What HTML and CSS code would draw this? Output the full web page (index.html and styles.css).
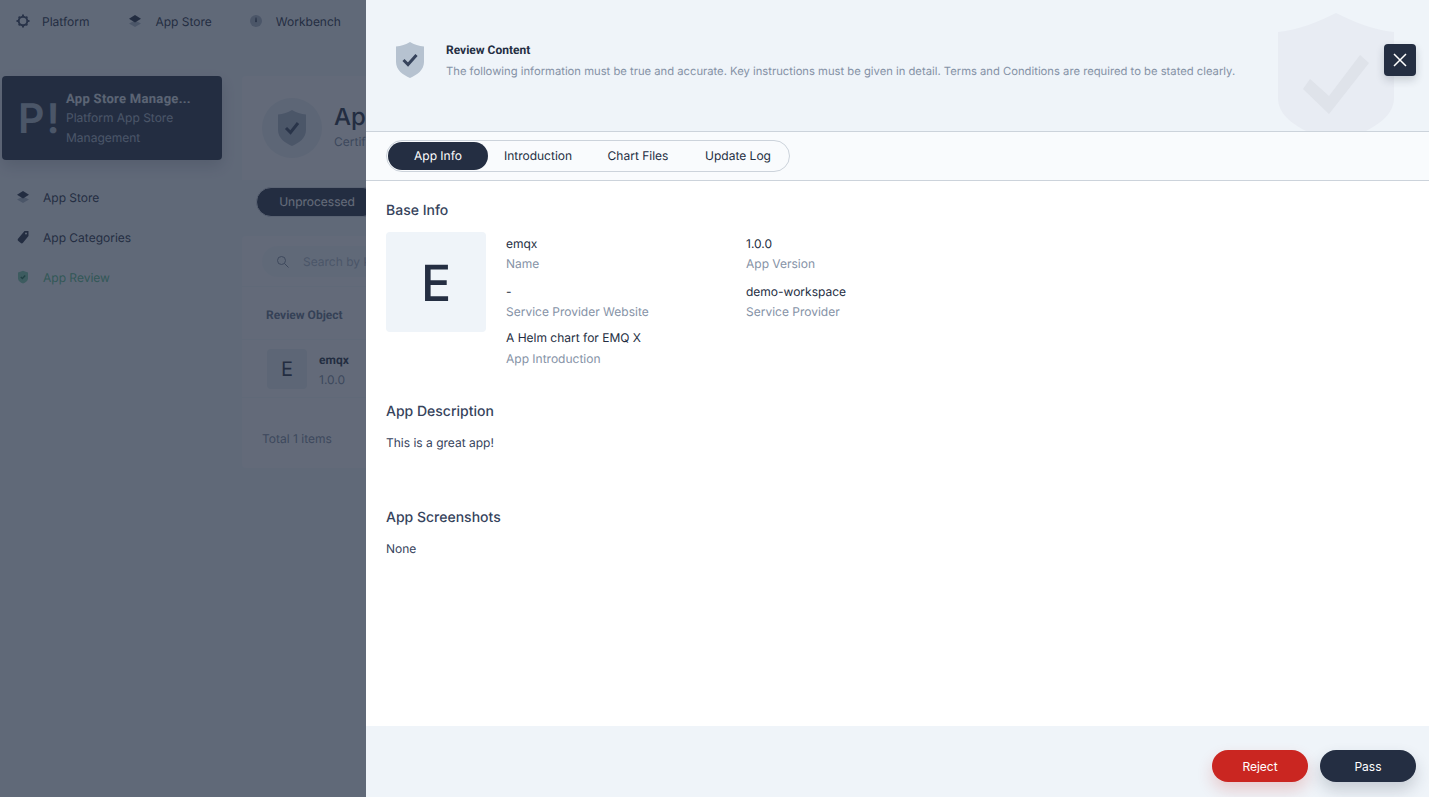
FILE: index.html
```html
<!DOCTYPE html>
<html lang="en">
<head>
<meta charset="UTF-8">
<meta name="viewport" content="width=device-width, initial-scale=1.0">
<title>App Review</title>
<link rel="stylesheet" href="styles.css">
</head>
<body>

<div class="page">
    <nav class="topnav">
        <a class="topnav-item">
            <svg class="icon" viewBox="0 0 16 16"><circle class="gear" cx="8" cy="8" r="4.300"/><path class="gear-teeth" d="M7 1.500h2v2H7zM7 12.500h2v2H7zM1.500 7h2v2h-2zM12.500 7h2v2h-2zM3 4.300l1.300-1.300 1.400 1.400-1.300 1.300zM10.300 11.600l1.300-1.300 1.400 1.400-1.300 1.300zM10.300 4.400l1.400-1.400 1.300 1.300-1.400 1.400zM3 11.700l1.400-1.400 1.300 1.300-1.400 1.400z"/></svg>
            <span>Platform</span>
        </a>
        <a class="topnav-item">
            <svg class="icon" viewBox="0 0 16 16"><path class="layer-light" d="M8 7.500 14 10.500 8 14 2 10.500Z"/><path class="layer-dark" d="M8 2 14 5.800 8 9.500 2 5.800Z"/></svg>
            <span>App Store</span>
        </a>
        <a class="topnav-item">
            <svg class="icon" viewBox="0 0 16 16"><circle class="layer-light" cx="8" cy="8" r="6"/><path class="layer-dark" d="M7.600 4.500h.8l.4 4a.8.8 0 1 1-1.600 0Z"/></svg>
            <span>Workbench</span>
        </a>
    </nav>

    <div class="layout">
        <aside class="sidebar">
            <div class="banner">
                <div class="banner-logo">P<span class="bang">!</span></div>
                <div class="banner-text">
                    <div class="banner-title">App Store Manage...</div>
                    <div class="banner-desc">Platform App Store Management</div>
                </div>
            </div>
            <ul class="side-menu">
                <li>
                    <svg class="icon" viewBox="0 0 16 16"><path class="layer-light" d="M8 7.500 14 10.500 8 14 2 10.500Z"/><path class="layer-dark" d="M8 2 14 5.800 8 9.500 2 5.800Z"/></svg>
                    App Store
                </li>
                <li>
                    <svg class="icon" viewBox="0 0 16 16"><path class="layer-dark" fill-rule="evenodd" d="M9.500 2H13.500V7L8 13.800c-.6.700-1.500.800-2.200.300L3.300 12c-.700-.600-.800-1.500-.300-2.200ZM11 3.500a1 1 0 1 0 0 2 1 1 0 0 0 0-2Z"/></svg>
                    App Categories
                </li>
                <li class="active">
                    <svg class="icon" viewBox="0 0 16 16"><path class="shield-green" d="M8 1.800 13 3.500v6c0 2.500-2.500 4-5 5-2.500-1-5-2.500-5-5v-6Z"/><path class="check-green" d="m5.800 8 1.600 1.600 2.800-3"/></svg>
                    App Review
                </li>
            </ul>
        </aside>

        <main class="content">
            <section class="content-head">
                <div class="head-circle">
                    <svg viewBox="0 0 28 36"><path class="shield-grey" d="M14 0C18 2.500 23 4 28 4.500V20c0 8-7 13-14 16C7 33 0 28 0 20V4.500C5 4 10 2.500 14 0Z"/><path class="check-dark" d="m8 18 4.500 4.500L20 13"/></svg>
                </div>
                <div class="head-text">
                    <h1>App Review</h1>
                    <p>Certification and review of apps</p>
                </div>
            </section>
            <div class="status-tabs">
                <span class="status-active">Unprocessed</span>
            </div>
            <section class="table-card">
                <div class="search-row">
                    <div class="search-box">
                        <svg class="search-icon" viewBox="0 0 14 14"><circle cx="5.500" cy="5.500" r="4"/><path d="m8.500 8.500 4 4"/></svg>
                        <span class="search-text">Search by keyword</span>
                    </div>
                </div>
                <div class="table-head">Review Object</div>
                <div class="table-row">
                    <div class="row-icon">E</div>
                    <div>
                        <div class="row-name">emqx</div>
                        <div class="row-version">1.0.0</div>
                    </div>
                </div>
                <div class="table-foot">Total 1 items</div>
            </section>
        </main>
    </div>
</div>

<div class="mask"></div>

<div class="drawer">
    <header class="drawer-head">
        <svg class="head-shield" viewBox="0 0 28 36"><path class="shield-light" d="M14 0C18 2.500 23 4 28 4.500V20c0 8-7 13-14 16C7 33 0 28 0 20V4.500C5 4 10 2.500 14 0Z"/><path class="check-dark" d="m7.500 18 4.500 4.500L20.500 13"/></svg>
        <div>
            <div class="drawer-title">Review Content</div>
            <div class="drawer-desc">The following information must be true and accurate. Key instructions must be given in detail. Terms and Conditions are required to be stated clearly.</div>
        </div>
        <svg class="bg-shield" viewBox="0 0 116 130"><path class="bg-shield-body" d="M58 0C76 9 96 17 116 19V85c0 22-28 35-58 45C28 120 0 107 0 85V19C20 17 40 9 58 0Z"/><path class="bg-shield-check" d="M25 76 51 101 91 50 82 42 51 83 32 66Z"/></svg>
    </header>

    <button class="close-btn">
        <svg viewBox="0 0 14 14"><path d="m1 1 12 12M13 1 1 13"/></svg>
    </button>

    <div class="tabs-bar">
        <div class="tabs">
            <span class="tab tab-active">App Info</span>
            <span class="tab">Introduction</span>
            <span class="tab">Chart Files</span>
            <span class="tab">Update Log</span>
        </div>
    </div>

    <div class="drawer-body">
        <h3 class="section-title">Base Info</h3>
        <div class="base-info">
            <div class="app-icon">E</div>
            <div class="info-grid">
                <div class="info-item">
                    <div class="info-value">emqx</div>
                    <div class="info-label">Name</div>
                </div>
                <div class="info-item">
                    <div class="info-value">1.0.0</div>
                    <div class="info-label">App Version</div>
                </div>
                <div class="info-item">
                    <div class="info-value">-</div>
                    <div class="info-label">Service Provider Website</div>
                </div>
                <div class="info-item">
                    <div class="info-value">demo-workspace</div>
                    <div class="info-label">Service Provider</div>
                </div>
                <div class="info-item info-wide">
                    <div class="info-value">A Helm chart for EMQ X</div>
                    <div class="info-label">App Introduction</div>
                </div>
            </div>
        </div>

        <h3 class="section-title title-desc">App Description</h3>
        <p class="section-text">This is a great app!</p>

        <h3 class="section-title title-shots">App Screenshots</h3>
        <p class="section-text">None</p>
    </div>

    <footer class="drawer-foot">
        <button class="btn btn-danger">Reject</button>
        <button class="btn btn-dark">Pass</button>
    </footer>
</div>

</body>
</html>
```

FILE: styles.css
```css
* {
    box-sizing: border-box;
}
html, body {
    height: 100%;
}
body {
    margin: 0;
    overflow: hidden;
    font-family: Inter, "Liberation Sans", sans-serif;
    font-size: 12px;
    color: #242e42;
    background-color: #eff4f9;
    text-rendering: geometricPrecision;
}
.page {
    height: 100%;
}
.icon {
    width: 16px;
    height: 16px;
    flex: none;
}
.gear {
    fill: none;
    stroke: #36435c;
    stroke-width: 2;
}
.gear-teeth {
    fill: #36435c;
}
.layer-dark {
    fill: #242e42;
}
.layer-light {
    fill: #a7b4c4;
}
.shield-green {
    fill: #7bc8a8;
}
.check-green {
    fill: none;
    stroke: #1c6e4c;
    stroke-width: 1.400;
}
.shield-grey {
    fill: #a7b4c4;
}
.shield-light {
    fill: #b6c2d0;
}
.check-dark {
    fill: none;
    stroke: #36435c;
    stroke-width: 3;
}

/* top navigation */
.topnav {
    display: flex;
    height: 44px;
    padding-left: 15px;
    gap: 37px;
    align-items: center;
}
.topnav-item {
    display: flex;
    align-items: center;
    gap: 12px;
    margin-top: -2px;
}
.topnav-item:first-child {
    gap: 11px;
    margin-right: 1px;
}
.topnav-item:nth-child(2) {
    margin-right: -1px;
}

/* page under the mask */
.layout {
    display: flex;
    width: 366px;
    overflow: hidden;
    padding: 32px 0 0 2px;
    gap: 20px;
}
.sidebar {
    width: 220px;
    flex: none;
}
.banner {
    display: flex;
    height: 84px;
    padding: 12px 20px 0 16px;
    gap: 16px;
    background-color: #242e42;
    border-radius: 4px;
    box-shadow: 0 6px 16px rgba(36, 46, 66, 0.2);
    color: #eff4f9;
}
.banner-logo {
    width: 32px;
    font-size: 41px;
    font-weight: 600;
    line-height: 60px;
    color: #a7b4c4;
    white-space: nowrap;
}
.bang {
    margin-left: 2px;
}
.banner-text {
    min-width: 0;
}
.banner-title {
    font-family: Roboto, sans-serif;
    font-size: 13px;
    font-weight: 700;
    line-height: 24px;
    letter-spacing: 0.3px;
    color: #dfe5ec;
    white-space: nowrap;
}
.banner-desc {
    margin-top: -4px;
    line-height: 20px;
    color: #a7b4c4;
}
.side-menu {
    list-style: none;
    margin: 17px 0 0;
    padding: 0 0 0 13px;
}
.side-menu li {
    display: flex;
    align-items: center;
    gap: 12px;
    height: 40px;
}
.side-menu .active {
    color: #55bc8a;
}
.content {
    width: 1000px;
    flex: none;
}
.content-head {
    display: flex;
    align-items: center;
    gap: 12px;
    height: 104px;
    padding: 0 20px;
    background-color: #f7f9fb;
    border-radius: 4px 4px 0 0;
}
.head-circle {
    display: flex;
    align-items: center;
    justify-content: center;
    width: 60px;
    height: 60px;
    border-radius: 50%;
    background-color: #e4e9f0;
}
.head-circle svg {
    width: 28px;
}
.head-text {
    width: 32px;
    overflow: hidden;
    white-space: nowrap;
}
.content-head h1 {
    margin: -7px 0 1px;
    font-size: 24px;
    font-weight: 500;
    line-height: 32px;
}
.content-head p {
    margin: 0;
    color: #79879c;
}
.status-tabs {
    display: flex;
    margin: 7px 0 19px 14px;
    line-height: 28px;
}
.status-tabs span {
    width: 122px;
    height: 30px;
    border: 1px solid #d8dee5;
    text-align: center;
}
.status-tabs .status-active {
    border-radius: 15px;
    background-color: #242e42;
    color: #fff;
}
.table-card {
    background-color: #f7f9fb;
    border-radius: 4px;
    height: 232px;
}
.search-row {
    padding: 10px 20px;
    height: 51px;
    border-bottom: 1px solid #eff4f9;
}
.search-box {
    display: flex;
    align-items: center;
    gap: 13px;
    height: 31px;
    padding-left: 14px;
    border-radius: 16px;
    background-color: #eff4f9;
    color: #a7b4c4;
}
.search-text {
    white-space: nowrap;
}
.search-icon {
    width: 14px;
    height: 14px;
    fill: none;
    stroke: #79879c;
}
.table-head {
    height: 53px;
    padding: 0 24px;
    font-family: Roboto, sans-serif;
    font-weight: 700;
    line-height: 56px;
    color: #5f6f88;
    border-bottom: 1px solid #eff4f9;
}
.table-row {
    display: flex;
    align-items: center;
    gap: 12px;
    height: 58px;
    padding: 0 25px;
    border-bottom: 1px solid #eff4f9;
}
.row-icon {
    width: 40px;
    height: 40px;
    border-radius: 4px;
    background-color: #e4e9f0;
    font-size: 20px;
    line-height: 40px;
    text-align: center;
}
.row-name {
    margin-top: 3px;
    font-family: Roboto, sans-serif;
    font-weight: 700;
    line-height: 20px;
}
.row-version {
    line-height: 20px;
    color: #79879c;
}
.table-foot {
    padding: 1px 20px 0;
    line-height: 80px;
    color: #79879c;
}

.mask {
    position: fixed;
    inset: 0;
    background-color: rgba(36, 46, 66, 0.7);
}

/* review drawer */
.drawer {
    position: fixed;
    top: 0;
    right: 0;
    bottom: 0;
    width: 1063px;
    display: flex;
    flex-direction: column;
    background-color: #fff;
}
.drawer-head {
    position: relative;
    display: flex;
    gap: 22px;
    flex: none;
    height: 132px;
    padding: 42px 30px 0;
    overflow: hidden;
    background-color: #eff4f9;
    border-bottom: 1px solid #ccd3db;
}
.head-shield {
    width: 28px;
    height: 36px;
    flex: none;
}
.drawer-title {
    font-family: Roboto, sans-serif;
    font-weight: 700;
    line-height: 16px;
}
.drawer-desc {
    margin-top: 5px;
    font-size: 11.240px;
    line-height: 16px;
    color: #8592a6;
    white-space: nowrap;
}
.bg-shield {
    position: absolute;
    left: 912px;
    top: 13px;
    width: 116px;
    height: 130px;
}
.bg-shield-body {
    fill: #e8ecf3;
}
.bg-shield-check {
    fill: #dfe3ea;
}
.close-btn {
    position: absolute;
    top: 44px;
    right: 13px;
    display: flex;
    align-items: center;
    justify-content: center;
    width: 32px;
    height: 32px;
    padding: 0;
    border: none;
    border-radius: 4px;
    background-color: #242e42;
    box-shadow: 0 4px 8px rgba(36, 46, 66, 0.2);
}
.close-btn svg {
    width: 14px;
    height: 14px;
    fill: none;
    stroke: #fff;
    stroke-width: 1.500;
}
.tabs-bar {
    flex: none;
    height: 49px;
    padding: 8px 20px 0;
    background-color: #f9fbfd;
    border-bottom: 1px solid #ccd3db;
}
.tabs {
    display: inline-flex;
    height: 32px;
    padding: 1px;
    border: 1px solid #ccd3db;
    border-radius: 16px;
}
.tab {
    width: 100px;
    border-radius: 14px;
    line-height: 28px;
    text-align: center;
}
.tab-active {
    background-color: #242e42;
    color: #fff;
}
.drawer-body {
    flex: 1;
    padding: 21px 20px 0;
}
.section-title {
    margin: 0;
    font-size: 14px;
    font-weight: 500;
    line-height: 18px;
    color: #36435c;
}
.base-info {
    display: flex;
    gap: 20px;
    margin-top: 12px;
}
.app-icon {
    width: 100px;
    height: 100px;
    flex: none;
    border-radius: 4px;
    background-color: #eff4f9;
    font-size: 50px;
    font-weight: 500;
    line-height: 104px;
    text-align: center;
}
.info-grid {
    display: grid;
    grid-template-columns: 240px 240px;
    grid-auto-rows: 48px;
    padding-top: 2px;
}
.info-wide {
    grid-column: 1 / 3;
    margin-top: -2px;
}
.info-value {
    line-height: 20px;
    color: #242e42;
}
.info-label {
    line-height: 20px;
    color: #8592a6;
}
.info-wide .info-label {
    margin-top: 1px;
}
.title-desc {
    margin-top: 25px;
}
.title-shots {
    margin-top: 58px;
}
.section-text {
    margin: 14px 0 0;
    line-height: 16px;
    color: #36435c;
}
.drawer-foot {
    display: flex;
    justify-content: flex-end;
    gap: 12px;
    flex: none;
    height: 71px;
    padding: 24px 13px 0 0;
    background-color: #eff4f9;
}
.btn {
    width: 96px;
    height: 32px;
    border: none;
    border-radius: 16px;
    font-family: Inter, "Liberation Sans", sans-serif;
    font-size: 12px;
    color: #fff;
}
.btn-danger {
    background-color: #ca2621;
    box-shadow: 0 8px 16px rgba(202, 38, 33, 0.2);
}
.btn-dark {
    background-color: #242e42;
    box-shadow: 0 8px 16px rgba(36, 46, 66, 0.2);
}
```
